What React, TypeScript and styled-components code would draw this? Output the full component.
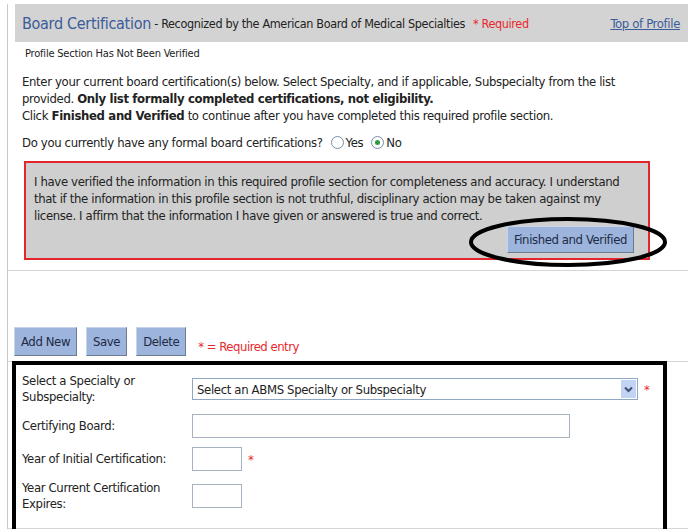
import styled, { createGlobalStyle } from "styled-components"

const GlobalStyle = createGlobalStyle`
  body {
    margin: 0;
    background: #fff;
    font-family: "DejaVu Sans Condensed", "DejaVu Sans", sans-serif;
    letter-spacing: -0.35px;
    color: #222;
  }
`

const Page = styled.div`
  position: relative;
  width: 688px;
  height: 529px;
  overflow: hidden;
  background: #fff;
`

const Frame = styled.div`
  margin-left: 7px;
  border-left: 1px solid #c9c9c9;
  min-height: 529px;
`

const Header = styled.div`
  display: flex;
  align-items: center;
  height: 38px;
  margin: 4px 0 0 7px;
  padding: 0 8px 0 7px;
  background: #d3d3d3;
  font-size: 12.5px;
  letter-spacing: -0.35px;
  white-space: nowrap;
`

const Title = styled.span`
  color: #3b5c99;
  font-size: 16px;
  letter-spacing: -0.3px;
`

const Required = styled.span`
  color: #e8282e;
  margin-left: 8px;
`

const TopLink = styled.a`
  margin-left: auto;
  color: #3b5c99;
  text-decoration: underline;
  font-size: 13px;
`

const Status = styled.div`
  font-size: 11px;
  letter-spacing: -0.2px;
  margin: 5px 0 0 17px;
  color: #222;
`

const Intro = styled.p`
  margin: 13px 0 0 14px;
  font-size: 13px;
  line-height: 17px;
  width: 640px;
`

const Question = styled.div`
  display: flex;
  align-items: center;
  margin: 11px 0 0 14px;
  font-size: 13px;
`

const Radio = styled.span<{ $checked?: boolean }>`
  display: inline-flex;
  align-items: center;
  justify-content: center;
  width: 11px;
  height: 11px;
  margin: 0 2px 0 8px;
  border: 1px solid #7b8da8;
  border-radius: 50%;
  background: #fff;
  &::after {
    content: "";
    display: ${(p) => (p.$checked ? "block" : "none")};
    width: 5px;
    height: 5px;
    border-radius: 50%;
    background: #2f9a3c;
  }
`

const Affirm = styled.div`
  display: flex;
  flex-direction: column;
  margin: 11px 0 0 16px;
  width: 606px;
  height: 83px;
  padding: 10px 8px 2px 8px;
  background: #cfcfcf;
  border: 2px solid #e3262b;
  font-size: 13px;
  line-height: 17px;
`

const Button = styled.button`
  height: 29px;
  padding: 0 6px;
  background: #9db4dd;
  border: 1px solid;
  border-color: #c6d3ec #6d7a90 #6d7a90 #c6d3ec;
  color: #1d2a44;
  font-family: inherit;
  font-size: 13px;
  letter-spacing: -0.4px;
  cursor: pointer;
`

const FinishButton = styled(Button)`
  align-self: flex-end;
  height: 27px;
  margin: 2px 6px 0 0;
  padding: 0 6px;
`

const Divider = styled.div`
  height: 1px;
  background: #d6d6d6;
`

const Toolbar = styled.div`
  display: flex;
  align-items: flex-end;
  gap: 9px;
  height: 90px;
  padding: 0 0 5px 6px;
  box-sizing: border-box;
`

const Note = styled.span`
  color: #e8282e;
  font-size: 13px;
  letter-spacing: -0.5px;
  margin: 0 0 2px 3px;
`

const Form = styled.div`
  display: grid;
  grid-template-columns: 170px auto;
  align-items: center;
  row-gap: 9px;
  padding: 11px 0 16px 14px;
  border-bottom: 1px solid #d6d6d6;
  font-size: 13px;
`

const Label = styled.div`
  line-height: 16px;
`

const Field = styled.div`
  display: flex;
  align-items: center;
`

const Select = styled.div`
  display: flex;
  align-items: center;
  width: 440px;
  height: 20px;
  border: 1px solid #8fa6c4;
  padding-left: 4px;
  box-sizing: content-box;
`

const SelectArrow = styled.span`
  display: flex;
  align-items: center;
  justify-content: center;
  width: 15px;
  height: 18px;
  margin-left: auto;
  margin-right: 1px;
  background: #c3d3f3;
  color: #3c4e78;
`

const Input = styled.div<{ $width: number }>`
  width: ${(p) => p.$width}px;
  height: 22px;
  border: 1px solid #a7b3c2;
  background: #fff;
`

const Star = styled.span`
  color: #e8282e;
  margin-left: 6px;
  font-size: 13px;
`

const Ellipse = styled.svg`
  position: absolute;
  left: 468px;
  top: 216px;
`

const Highlight = styled.div`
  position: absolute;
  left: 12px;
  top: 361px;
  width: 647px;
  height: 200px;
  border: 4px solid #000;
`

export default function App() {
  return (
    <Page>
      <GlobalStyle />
      <Frame>
        <Header>
          <Title>Board Certification</Title>
          &nbsp;- Recognized by the American Board of Medical Specialties
          <Required>* Required</Required>
          <TopLink>Top of Profile</TopLink>
        </Header>
        <Status>Profile Section Has Not Been Verified</Status>
        <Intro>
          Enter your current board certification(s) below. Select Specialty, and if applicable,
          Subspecialty from the list provided.{" "}
          <b>Only list formally completed certifications, not eligibility.</b>
          <br />
          Click <b>Finished and Verified</b> to continue after you have completed this required
          profile section.
        </Intro>
        <Question>
          Do you currently have any formal board certifications?
          <Radio />
          Yes
          <Radio $checked />
          No
        </Question>
        <Affirm>
          I have verified the information in this required profile section for completeness and
          accuracy. I understand that if the information in this profile section is not truthful,
          disciplinary action may be taken against my license. I affirm that the information I
          have given or answered is true and correct.
          <FinishButton>Finished and Verified</FinishButton>
        </Affirm>
        <Divider style={{ marginTop: 10 }} />
        <Toolbar>
          <Button>Add New</Button>
          <Button>Save</Button>
          <Button>Delete</Button>
          <Note>* = Required entry</Note>
        </Toolbar>
        <Divider />
        <Form>
          <Label>
            Select a Specialty or
            <br />
            Subspecialty:
          </Label>
          <Field>
            <Select>
              Select an ABMS Specialty or Subspecialty
              <SelectArrow>
                <svg width="9" height="7" viewBox="0 0 9 7">
                  <path d="M1 1.5 L4.5 5 L8 1.5" fill="none" stroke="currentColor" strokeWidth="2" />
                </svg>
              </SelectArrow>
            </Select>
            <Star>*</Star>
          </Field>
          <Label>Certifying Board:</Label>
          <Field>
            <Input $width={376} />
          </Field>
          <Label>Year of Initial Certification:</Label>
          <Field>
            <Input $width={48} />
            <Star>*</Star>
          </Field>
          <Label>
            Year Current Certification
            <br />
            Expires:
          </Label>
          <Field>
            <Input $width={48} />
          </Field>
        </Form>
      </Frame>
      <Ellipse width="200" height="52" viewBox="0 0 200 52">
        <ellipse cx="100" cy="26" rx="97" ry="23" fill="none" stroke="#000" strokeWidth="4" />
      </Ellipse>
      <Highlight />
    </Page>
  )
}
